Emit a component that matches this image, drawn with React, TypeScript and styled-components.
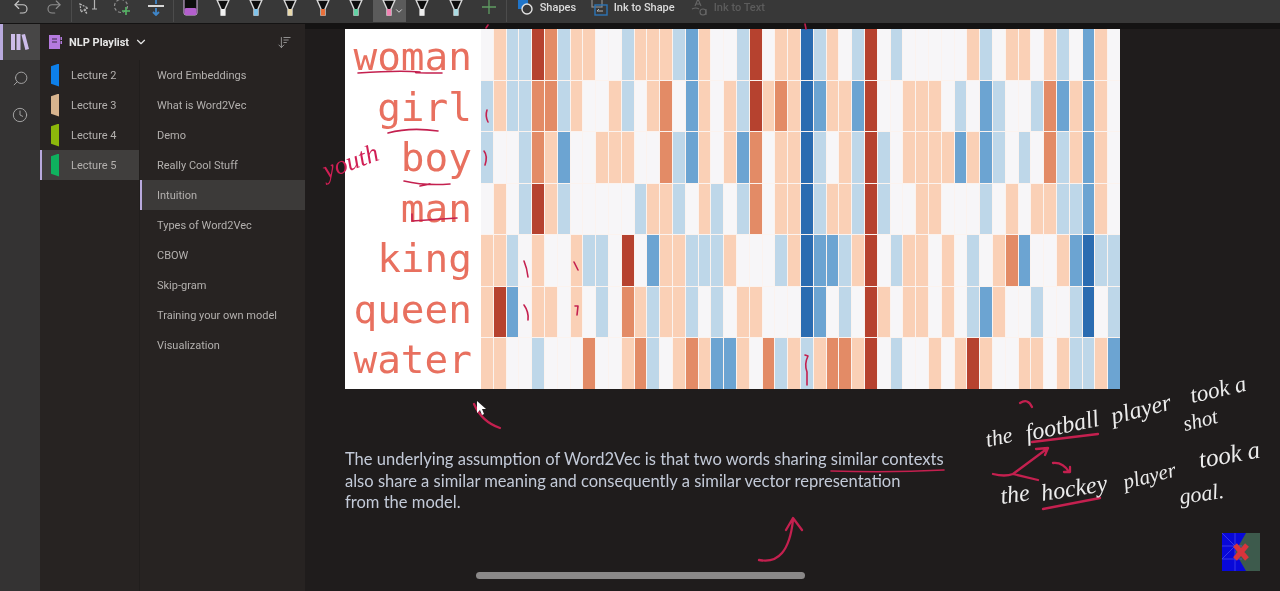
import { FC } from "react";
import styled, { createGlobalStyle } from "styled-components";
import {
  ArrowDownWideNarrow,
  ChevronDown,
  Clock,
  Redo2,
  Search,
  Undo2,
} from "lucide-react";

const GlobalStyle = createGlobalStyle`
    html, body {
        margin: 0;
        padding: 0;
        background: #1f1c1c;
    }
    * {
        box-sizing: border-box;
    }
`;

const Root = styled.div`
    position: relative;
    width: 1280px;
    height: 591px;
    overflow: hidden;
    display: flex;
    flex-direction: column;
    background: #1f1c1c;
    font-family: Roboto, "Noto Sans", sans-serif;
    filter: blur(0.35px);
`;

/* toolbar: cut off by the top of the video frame */
const Toolbar = styled.div`
    flex: 0 0 24px;
    height: 24px;
    overflow: hidden;
    background: #383838;
    border-bottom: 1px solid #141313;
`;
const ToolTrack = styled.div`
    display: flex;
    align-items: center;
    height: 30px;
    margin-top: -8px;
    padding-left: 4px;
`;
const ToolSlot = styled.div<{ $color?: string }>`
    flex: 0 0 33.5px;
    display: flex;
    justify-content: center;
    color: ${(p) => p.$color || "#c8c8c8"};
`;
const ToolDivider = styled.div`
    flex: 0 0 1px;
    height: 30px;
    background: #4c4c4c;
`;
const PenSlot = styled.div<{ $active?: boolean }>`
    position: relative;
    flex: 0 0 33.2px;
    height: 30px;
    display: flex;
    align-items: flex-end;
    justify-content: center;
    padding-bottom: 6px;
    background: ${(p) => (p.$active ? "#5b5b5b" : "transparent")};
    svg.chevron {
        position: absolute;
        right: 2px;
        bottom: 6px;
        color: #e8e8e8;
    }
`;
const ToolButton = styled.div<{ $dim?: boolean; $width: number }>`
    flex: 0 0 ${(p) => p.$width}px;
    display: flex;
    align-items: center;
    gap: 6px;
    padding-left: 10px;
    font-size: 11px;
    font-weight: 500;
    color: ${(p) => (p.$dim ? "#5c5c5c" : "#dcdcdc")};
    white-space: nowrap;
`;

const Body = styled.div`
    flex: 1;
    display: flex;
    min-height: 0;
`;

const Rail = styled.div`
    flex: 0 0 40px;
    display: flex;
    flex-direction: column;
    background: #343333;
`;
const RailButton = styled.div<{ $active?: boolean }>`
    height: ${(p) => (p.$active ? 36 : 38)}px;
    display: flex;
    align-items: center;
    justify-content: center;
    color: #a9a9a9;
    background: ${(p) => (p.$active ? "#474646" : "transparent")};
    border-left: 3px solid ${(p) => (p.$active ? "#b9aade" : "transparent")};
    padding-right: 3px;
    & + & {
        margin-top: -1px;
    }
`;

const Sidebar = styled.div`
    flex: 0 0 265px;
    display: flex;
    flex-direction: column;
    background: #272322;
`;
const NotebookHeader = styled.div`
    flex: 0 0 36px;
    display: flex;
    align-items: center;
    padding: 0 13px 0 9px;
    color: #e6e6e6;
    font-size: 11px;
    font-weight: 700;
    span {
        margin: 0 5px 0 7px;
    }
`;
const HeaderSort = styled.div`
    margin-left: auto;
    display: flex;
    color: #a9a9a9;
`;
const Columns = styled.div`
    flex: 1;
    display: flex;
`;
const SectionList = styled.div`
    flex: 0 0 100px;
    border-right: 1px solid #211e1d;
`;
const PageList = styled.div`
    flex: 1;
`;
const SectionRow = styled.div<{ $active?: boolean }>`
    height: 30px;
    display: flex;
    align-items: center;
    gap: 12px;
    padding-left: 9px;
    font-size: 11px;
    color: #b3b0ae;
    background: ${(p) => (p.$active ? "#403e3d" : "transparent")};
    border-left: 2px solid ${(p) => (p.$active ? "#b9aade" : "transparent")};
`;
const SectionTab = styled.i<{ $color: string }>`
    display: block;
    width: 8px;
    height: 23px;
    background: ${(p) => p.$color};
    clip-path: polygon(0 12%, 100% 0, 100% 100%, 0 88%);
`;
const PageRow = styled.div<{ $active?: boolean }>`
    height: 30px;
    display: flex;
    align-items: center;
    padding-left: 15px;
    font-size: 11px;
    color: #b3b0ae;
    background: ${(p) => (p.$active ? "#3c3a39" : "transparent")};
    border-left: 2px solid ${(p) => (p.$active ? "#b9aade" : "transparent")};
`;

const Canvas = styled.div`
    flex: 1;
    padding: 5px 0 0 40px;
    background: linear-gradient(#141313 0, #141313 5px, #1f1c1c 5px);
`;
const Figure = styled.div`
    display: flex;
    width: 775px;
    height: 360px;
    background: #fff;
`;
const WordColumn = styled.div`
    flex: 0 0 136px;
    display: grid;
    grid-template-rows: repeat(7, 1fr);
    padding: 2.5px 0 4px;
`;
const Word = styled.div`
    display: flex;
    align-items: center;
    justify-content: flex-end;
    padding-right: 9px;
    font-family: "DejaVu Sans Mono", monospace;
    font-size: 39.4px;
    line-height: 1;
    color: #e8705f;
`;
const Heatmap = styled.div`
    flex: 1;
    display: grid;
    grid-template-columns: repeat(50, 1fr);
    grid-template-rows: repeat(7, 1fr);
    gap: 1px;
    background: #fbf3ef;
`;

const CELL_COLORS: Record<string, string> = {
  ".": "#f7f6f8",
  o: "#fad0b6",
  O: "#e38b66",
  R: "#b6422f",
  b: "#bed7e9",
  B: "#6ca4d2",
  D: "#2b6cb1",
};
const Cell = styled.div<{ $level: string }>`
    background: ${(p) => CELL_COLORS[p.$level]};
`;

const Paragraph = styled.p`
    width: 610px;
    margin: 60px 0 0;
    font-family: Lato, "Open Sans", sans-serif;
    font-size: 16.54px;
    line-height: 21.5px;
    color: #c3cad8;
`;

const Scrollbar = styled.div`
    position: absolute;
    left: 476px;
    top: 572px;
    width: 329px;
    height: 7px;
    border-radius: 4px;
    background: #8a8888;
`;
const InkLayer = styled.svg`
    position: absolute;
    inset: 0;
    width: 1280px;
    height: 591px;
    pointer-events: none;
`;
const InkWord = styled.span<{ $x: number; $y: number; $angle: number; $size?: number; $color?: string }>`
    position: absolute;
    left: ${(p) => p.$x}px;
    top: ${(p) => p.$y}px;
    transform: rotate(${(p) => p.$angle}deg);
    transform-origin: left bottom;
    font-family: "Liberation Serif", serif;
    font-style: italic;
    font-size: ${(p) => p.$size || 22}px;
    line-height: 1;
    color: ${(p) => p.$color || "#ececec"};
    white-space: nowrap;
`;
const Logo = styled.svg`
    position: absolute;
    left: 1222px;
    top: 533px;
`;

const HEAT_ROWS: string[][] = [
  [".","o","b","b","R","O","b","o","o",".",".","b","o","o","o","b","B","o",".",".","b","R",".","o","o","D","b","o",".","b","R",".","b",".",".",".",".",".","o","b",".","o","o",".","o","b",".","B","o","."],
  ["b","o","b","b","O","O","b","o",".",".","o","b",".","o","O",".","B","o",".","o","b","R","o","O","o","D","B","o","o","B","R",".",".","o","o","o",".","b",".","B","b",".",".","b","O","B","o","B","o","."],
  ["b",".",".","b","O","o","B",".",".","o","o","o",".",".","O","b","B","o",".","o","B","O",".","o","o","D","b",".","o","b","R","b",".","o","o","o","o","B","o","B","b",".","b",".","O","b","o","B","o","."],
  [".","o",".","b","R","o","b",".",".",".",".",".","b","o","o","b",".","o","b",".","b","O",".","o","o","D","b","o","o","b","R","b",".",".","o","o",".",".",".","b",".","o",".","o","o","b","b","B","o","."],
  ["o","o","b",".","o",".",".","o","b","b",".","R",".","B","o","o","b","b","b","o",".",".",".","b","o","D","B","B","b","o","R",".","b","o","o",".","o",".","b",".","o","O","B",".",".","o","B","D","b","b"],
  ["o","R","B",".","o","o",".","o",".","b",".","O","o","b","o","o","b",".","b",".","o","o",".",".",".","D","B",".","b",".","R","o",".","o","o",".","o",".","b","B","o",".",".","b",".",".","b","D",".","b"],
  ["o","o",".",".","b",".",".",".","O",".",".","o","O","b",".","o","O","o","B","B","o",".","O","b","o","b","o","O","O","o","R",".","b",".",".","o",".","o","R","o",".",".","o","o",".","o","b","b","o","B"],
];

const WORDS = ["woman", "girl", "boy", "man", "king", "queen", "water"];
const SECTIONS = [
  { name: "Lecture 2", color: "#0d7fe9" },
  { name: "Lecture 3", color: "#d8b48e" },
  { name: "Lecture 4", color: "#8cb70b" },
  { name: "Lecture 5", color: "#0fb15e", active: true },
];
const PAGES = [
  "Word Embeddings",
  "What is Word2Vec",
  "Demo",
  "Really Cool Stuff",
  "Intuition",
  "Types of Word2Vec",
  "CBOW",
  "Skip-gram",
  "Training your own model",
  "Visualization",
];
const PENS = [
  { tip: "#f2f2f2" },
  { tip: "#7fc3ea" },
  { tip: "#e9d9ab" },
  { tip: "#e9703a" },
  { tip: "#63d2a4" },
  { tip: "#f283b4", active: true },
  { tip: "#eeeeee" },
  { tip: "#aadbe2" },
];
const NOTE = [
  { text: "the", x: 988, y: 429, angle: -12 },
  { text: "football", x: 1028, y: 421, angle: -12, size: 24 },
  { text: "player", x: 1114, y: 404, angle: -14, size: 24 },
  { text: "took a", x: 1193, y: 384, angle: -13, size: 23 },
  { text: "shot", x: 1186, y: 414, angle: -14, size: 21 },
  { text: "the", x: 1002, y: 484, angle: -8, size: 24 },
  { text: "hockey", x: 1043, y: 481, angle: -9, size: 24 },
  { text: "player", x: 1126, y: 472, angle: -14, size: 21 },
  { text: "took a", x: 1201, y: 447, angle: -10, size: 25 },
  { text: "goal.", x: 1181, y: 486, angle: -8, size: 22 },
];
const INK = "#c4204f";
const THIN_STROKES = [
  "M358 73 Q400 70 420 72 Q405 73 442 73",
  "M388 133 Q410 127 438 131",
  "M404 181 Q425 186 450 184 M420 186 L430 184",
  "M412 220 L412 214 M412 221 L457 218",
  "M487 110 Q485 116 488 122",
  "M484 151 Q488 156 485 165",
  "M524 261 Q527 268 528 277",
  "M574 262 L578 270",
  "M524 305 Q529 312 528 320",
  "M575 306 L578 306 L577 315",
  "M805 355 L808 356 Q804 364 807 372 L807 385",
  "M805 24 L806 29",
  "M488 25 L486 28",
  "M831 471 Q890 473 944 470",
];
const THICK_STROKES = [
  "M500 428 Q482 422 474 404",
  "M759 560 Q788 566 793 520 M786 530 L793 518 L802 530",
  "M1020 403 Q1028 398 1032 407",
  "M1032 442 L1098 434",
  "M993 474 Q1005 477 1013 474 L1048 448 M1036 449 L1048 448 L1045 455 M1013 474 L1038 480",
  "M1053 463 Q1063 462 1069 472 M1064 472 L1070 472 L1070 467",
  "M1043 509 L1100 498",
];

const PenIcon: FC<{ tip: string }> = ({ tip }) => (
  <svg width="14" height="16" viewBox="0 0 14 16">
    <path d="M1 0 L5 9 V15 H9 V9 L13 0 Z" fill="#0d0d0d" stroke="#d8d8d8" strokeWidth="1.4" />
    <path d="M5 9 H9 V15.5 H5 Z" fill={tip} />
  </svg>
);

const App: FC = () => {
  return (
    <Root>
      <GlobalStyle />
      <Toolbar>
        <ToolTrack>
          <ToolSlot><Undo2 size={18} strokeWidth={1.5} /></ToolSlot>
          <ToolSlot $color="#8d8d8d"><Redo2 size={18} strokeWidth={1.5} /></ToolSlot>
          <ToolDivider />
          <ToolSlot>
            <svg width="20" height="18" viewBox="0 0 20 18" fill="none" stroke="#b5b5b5" strokeWidth="1.2">
              <path d="M1 6 L9 10 L6 11 L8 16 L5 12 L2 14 Z" strokeDasharray="2 1" />
              <path d="M13 1 H18 M15.5 1 V11 M13 11 H18" />
            </svg>
          </ToolSlot>
          <ToolSlot>
            <svg width="18" height="18" viewBox="0 0 18 18" fill="none">
              <circle cx="8" cy="8" r="6.5" stroke="#8f8f8f" strokeWidth="1.2" strokeDasharray="3 2" />
              <path d="M13 9 V17 M9 13 H17" stroke="#55b765" strokeWidth="1.6" />
            </svg>
          </ToolSlot>
          <ToolSlot>
            <svg width="18" height="18" viewBox="0 0 18 18" fill="none">
              <path d="M1 8 H17" stroke="#d6d6d6" strokeWidth="2" />
              <path d="M9 1 V6 M9 10 V17 M6 14 L9 17 L12 14" stroke="#3f86c9" strokeWidth="1.8" />
            </svg>
          </ToolSlot>
          <ToolDivider />
          <PenSlot>
            <svg width="15" height="16" viewBox="0 0 15 16">
              <rect x="1" y="-4" width="13" height="19" rx="2" fill="#0d0d0d" stroke="#d9b8e6" strokeWidth="1" />
              <rect x="1.5" y="8" width="12" height="7" rx="1.5" fill="#b45fce" />
            </svg>
          </PenSlot>
          {PENS.map((pen, i) => (
            <PenSlot key={i} $active={pen.active}>
              <PenIcon tip={pen.tip} />
              {pen.active && <ChevronDown className="chevron" size={10} strokeWidth={2} />}
            </PenSlot>
          ))}
          <ToolSlot $color="#5f9c62">
            <svg width="14" height="14" viewBox="0 0 14 14" stroke="currentColor" strokeWidth="1.3">
              <path d="M7 0 V14 M0 7 H14" />
            </svg>
          </ToolSlot>
          <ToolDivider />
          <ToolButton $width={74}>
            <svg width="17" height="18" viewBox="0 0 17 18" fill="none">
              <rect x="1" y="0" width="10" height="11" fill="#1f74c8" />
              <circle cx="10" cy="11" r="5" stroke="#e2e2e2" strokeWidth="1.4" fill="#383838" />
            </svg>
            Shapes
          </ToolButton>
          <ToolButton $width={100}>
            <svg width="17" height="18" viewBox="0 0 17 18" fill="none">
              <rect x="1" y="0" width="10" height="9" stroke="#8e8e8e" strokeWidth="1.2" />
              <rect x="4" y="7" width="12" height="10" stroke="#2d74b5" strokeWidth="1.4" />
              <path d="M6 13 H12 M6 13 L8 11" stroke="#b5b5b5" strokeWidth="1" />
            </svg>
            Ink to Shape
          </ToolButton>
          <ToolButton $dim $width={90}>
            <svg width="17" height="18" viewBox="0 0 17 18" fill="none" stroke="#666" strokeWidth="1.1">
              <path d="M4 8 L7 1 L10 8 M5 6 H9 M1 11 Q5 9 8 11" />
              <circle cx="12" cy="14" r="3" />
              <path d="M15 11 V17" />
            </svg>
            Ink to Text
          </ToolButton>
        </ToolTrack>
      </Toolbar>

      <Body>
        <Rail>
          <RailButton $active>
            <svg width="18" height="16" viewBox="0 0 18 16" fill="#cdbdea">
              <rect x="0" y="0" width="4" height="16" />
              <rect x="5.5" y="0" width="4" height="16" />
              <path d="M10.5 0.8 L14 0 L18 15 L14.4 16 Z" />
            </svg>
          </RailButton>
          <RailButton>
            <Search size={17} strokeWidth={1.3} style={{ transform: "scaleX(-1)" }} />
          </RailButton>
          <RailButton>
            <Clock size={16} strokeWidth={1.4} />
          </RailButton>
        </Rail>

        <Sidebar>
          <NotebookHeader>
            <svg width="13" height="14" viewBox="0 0 13 14">
              <path d="M0 0 H11 V14 H0 Z" fill="#b57adf" />
              <path d="M11.5 2 H13 V5 H11.5 Z M11.5 6 H13 V9 H11.5 Z" fill="#b57adf" />
              <path d="M3 4 H8 M3 7 H8" stroke="#3a2a46" strokeWidth="1" />
            </svg>
            <span>NLP Playlist</span>
            <ChevronDown size={14} strokeWidth={2} />
            <HeaderSort>
              <ArrowDownWideNarrow size={15} strokeWidth={1.3} />
            </HeaderSort>
          </NotebookHeader>
          <Columns>
            <SectionList>
              {SECTIONS.map((section) => (
                <SectionRow key={section.name} $active={section.active}>
                  <SectionTab $color={section.color} />
                  {section.name}
                </SectionRow>
              ))}
            </SectionList>
            <PageList>
              {PAGES.map((page) => (
                <PageRow key={page} $active={page === "Intuition"}>
                  {page}
                </PageRow>
              ))}
            </PageList>
          </Columns>
        </Sidebar>

        <Canvas>
          <Figure>
            <WordColumn>
              {WORDS.map((word) => (
                <Word key={word}>{word}</Word>
              ))}
            </WordColumn>
            <Heatmap>
              {HEAT_ROWS.flatMap((row, r) =>
                row.map((level, c) => <Cell key={`${r}-${c}`} $level={level} />)
              )}
            </Heatmap>
          </Figure>
          <Paragraph>
            The underlying assumption of Word2Vec is that two words sharing similar contexts
            also share a similar meaning and consequently a similar vector representation
            <br />
            from the model.
          </Paragraph>
        </Canvas>
      </Body>

      <Scrollbar />

      <InkLayer viewBox="0 0 1280 591" fill="none" stroke={INK} strokeWidth="1.6" strokeLinecap="round" strokeLinejoin="round">
        {THIN_STROKES.map((d, i) => (
          <path key={i} d={d} />
        ))}
        {THICK_STROKES.map((d, i) => (
          <path key={i} d={d} strokeWidth="2.3" />
        ))}
        <path d="M477 401 L477 413 L480 410 L482 415 L484 414 L482 409 L486 409 Z" fill="#fff" stroke="none" />
      </InkLayer>
      <InkWord $x={328} $y={158} $angle={-20} $size={26} $color="#d11f55">youth</InkWord>
      {NOTE.map((w, i) => (
        <InkWord key={i} $x={w.x} $y={w.y} $angle={w.angle} $size={w.size}>{w.text}</InkWord>
      ))}

      <Logo width="38" height="38" viewBox="0 0 38 38">
        <rect x="0" y="0" width="38" height="38" fill="#3d5a4c" />
        <path d="M0 0 H24 L13 19 L24 38 H0 Z" fill="#0808d8" />
        <path d="M0 13 H20 M0 26 H20 M13 0 V38 M0 0 L13 13 L0 26" stroke="#5a5af0" strokeWidth="0.6" fill="none" />
        <path d="M13 12 L25 26 M25 12 L13 26" stroke="#d8343c" strokeWidth="5" />
      </Logo>
    </Root>
  );
};

export default App;
